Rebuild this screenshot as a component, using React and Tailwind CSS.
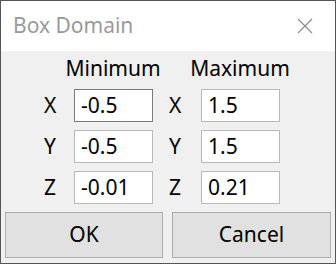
const ROWS = [
  { axis: "X", min: "-0.5", max: "1.5", focused: true },
  { axis: "Y", min: "-0.5", max: "1.5" },
  { axis: "Z", min: "-0.01", max: "0.21" },
];

function Field({ value, focused }) {
  return (
    <div
      className={`w-[79px] h-[33px] bg-white border flex items-center pl-[6px] text-[21px] leading-none text-black ${
        focused ? "border-[#7a7a7a]" : "border-[#b9b9b9]"
      }`}
    >
      {value}
    </div>
  );
}

export default function App() {
  return (
    <div className="w-[336px] h-[264px] border border-[#555555] bg-[#f0f0f0] flex flex-col font-['Noto_Sans',sans-serif] overflow-hidden">
      {/* title bar */}
      <div className="h-[50px] bg-white flex items-center justify-between pl-[12px] pr-[22px] shrink-0">
        <span className="text-[21px] text-[#9a9a9a] leading-none -mt-[2px]">Box Domain</span>
        <svg width="16" height="16" viewBox="0 0 16 16" className="-mt-[1px]">
          <path d="M1 1 L15 15 M15 1 L1 15" stroke="#8c8c8c" strokeWidth="1.2" fill="none" />
        </svg>
      </div>

      <div className="flex-1 flex flex-col">
        <div className="flex mt-[4px] h-[27px] items-center text-[21px] leading-[27px] text-black">
          <span className="ml-[52px] w-[120px] text-center whitespace-nowrap">Minimum</span>
          <span className="ml-[7px] w-[120px] text-center whitespace-nowrap">Maximum</span>
        </div>

        <div className="flex flex-col gap-[8px] mt-[7px]">
          {ROWS.map((r) => (
            <div key={r.axis} className="flex items-center text-[21px] text-black">
              <span className="ml-[43px] w-[30px]">{r.axis}</span>
              <Field value={r.min} focused={r.focused} />
              <span className="ml-[16px] w-[32px]">{r.axis}</span>
              <Field value={r.max} />
            </div>
          ))}
        </div>

        <div className="flex gap-[9px] px-[4px] mt-[8px]">
          <button className="w-[158px] h-[46px] bg-[#e1e1e1] border border-[#adadad] text-[21px] text-black">
            OK
          </button>
          <button className="w-[159px] h-[46px] bg-[#e1e1e1] border border-[#adadad] text-[21px] text-black">
            Cancel
          </button>
        </div>
      </div>
    </div>
  );
}
